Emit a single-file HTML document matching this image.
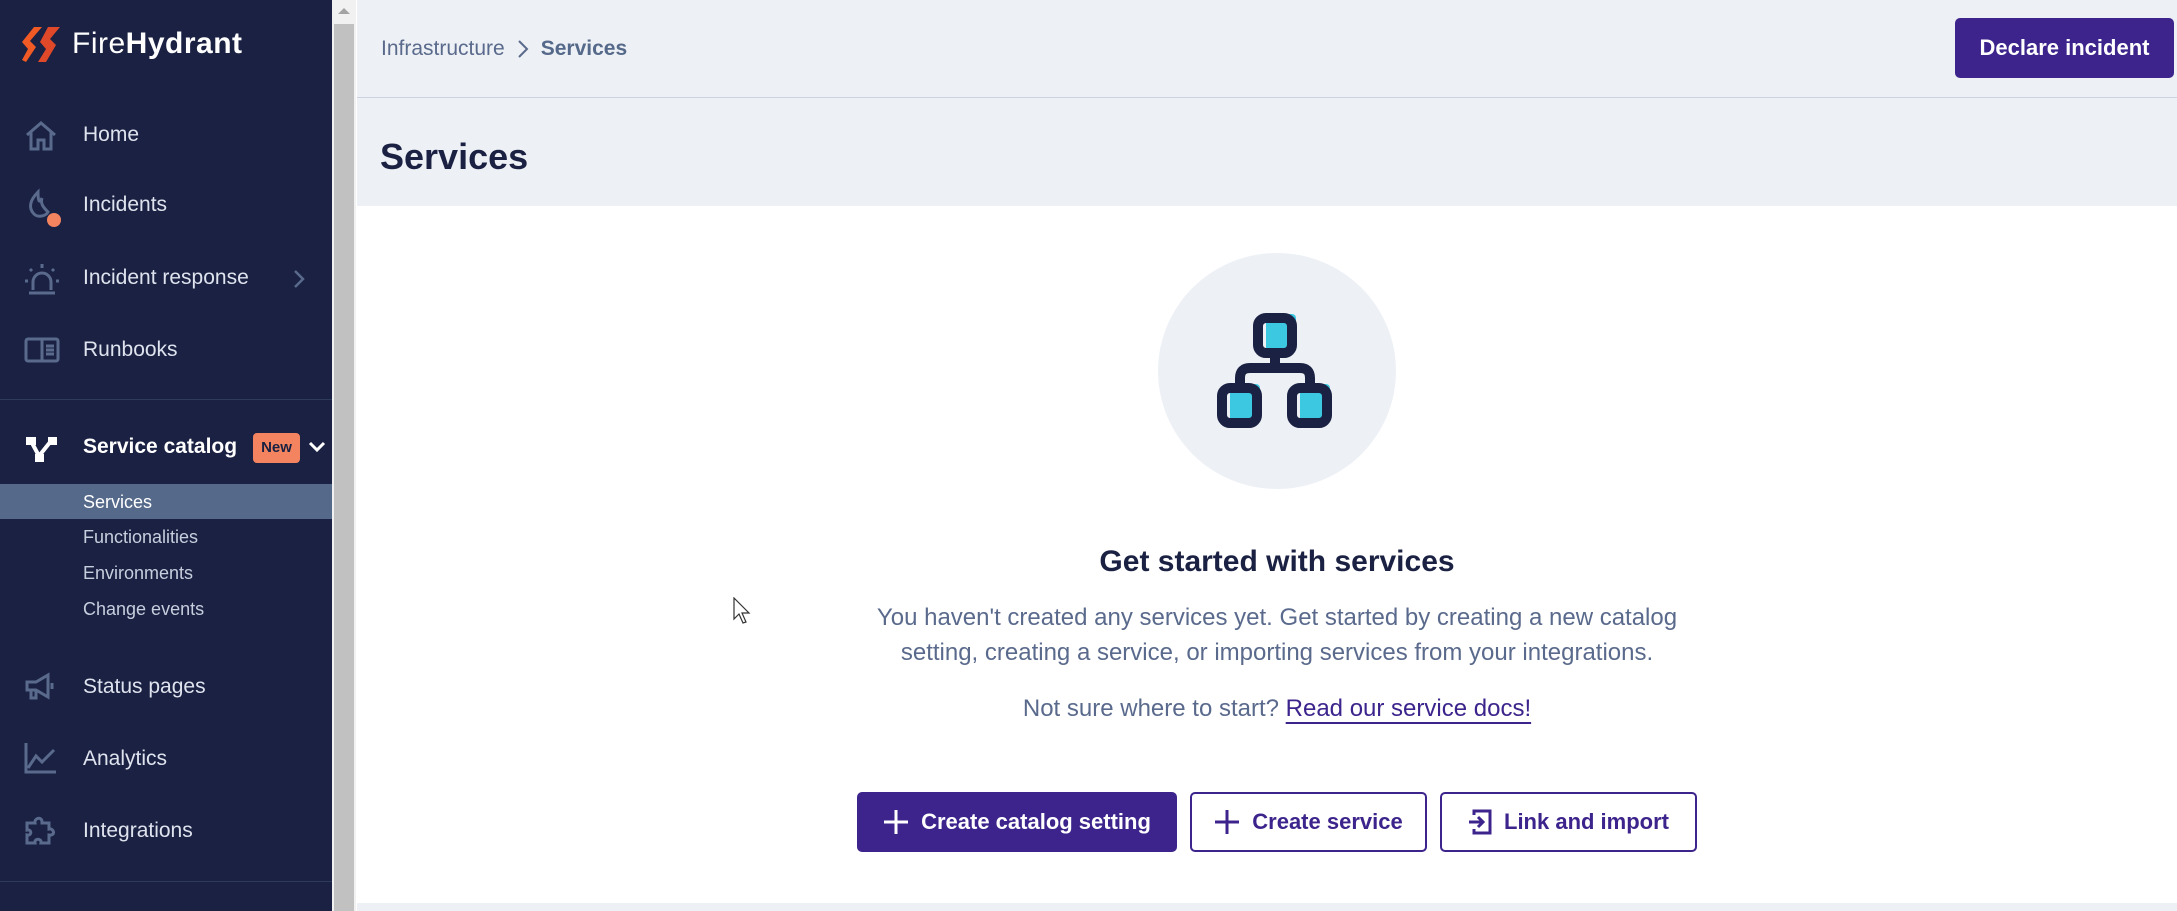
<!DOCTYPE html>
<html><head><meta charset="utf-8"><style>
*{margin:0;padding:0;box-sizing:border-box}
body{width:2177px;height:911px;overflow:hidden;background:#fff;font-family:"Liberation Sans",sans-serif;position:relative}
.side{position:absolute;left:0;top:0;width:332px;height:911px;background:#1a2142}
.sb{position:absolute;left:332px;top:0;width:24px;height:911px;background:#f1f1f1}
.sb .th{position:absolute;left:2px;top:24px;width:20px;height:887px;background:#c1c1c1}
.it{position:absolute;left:83px;color:#dfe3ee;font-size:21px;line-height:30px}
.ic{position:absolute;left:24px}
.sub{position:absolute;left:83px;color:#c7cede;font-size:18px;line-height:26px}
.main{position:absolute;left:357px;top:0;right:0;height:206px;background:#edf0f5}
.t{position:absolute;white-space:nowrap}
.btn{position:absolute;top:792px;height:60px;border-radius:5px;border:2px solid #3c248c;display:flex;align-items:center;justify-content:center;font-weight:bold;font-size:22px;gap:12px}
</style></head><body>
<div class="side">
  <svg style="position:absolute;left:22px;top:27px" width="38" height="35" viewBox="0 0 38 35"><path d="M12 0 L20 0 L8 14 L14 20 L4 35 L0 33 L6 22 L0 15 Z" fill="#f15a24"/><path d="M26 0 L38 0 L28 12 L34 18 L24 35 L16 35 L24 22 L18 15 Z" fill="#e0482a"/></svg>
  <div class="t" style="left:72px;top:27px;font-size:30px;color:#fff;letter-spacing:0.5px">Fire<b>Hydrant</b></div>

  <svg class="ic" style="top:121px" width="34" height="30" viewBox="0 0 34 30" fill="none" stroke="#5a6a8c" stroke-width="3"><path d="M3 14 L17 2 L31 14 M7 11 V28 H14 V19 H20 V28 H27 V11"/></svg>
  <div class="it" style="top:120px">Home</div>
  <svg class="ic" style="top:188px" width="40" height="40" viewBox="0 0 40 40" fill="none" stroke="#5a6a8c" stroke-width="3"><path d="M14 4 C6 12 4 20 10 26 C14 30 22 28 24 24 C20 20 16 16 18 10 C16 14 14 16 14 4Z"/><circle cx="30" cy="32" r="7" fill="#f4845f" stroke="none"/></svg>
  <div class="it" style="top:190px">Incidents</div>
  <svg class="ic" style="top:262px" width="36" height="34" viewBox="0 0 36 34" fill="none" stroke="#5a6a8c" stroke-width="3"><path d="M9 28 V20 A9 9 0 0 1 27 20 V28 M5 31 H31 M18 2 V6 M6 7 L8 9 M30 7 L28 9 M1 19 H4 M32 19 H35"/></svg>
  <div class="it" style="top:263px">Incident response</div>
  <svg style="position:absolute;left:293px;top:269px" width="12" height="20" viewBox="0 0 12 20" fill="none" stroke="#5a6a8c" stroke-width="2.5"><path d="M2 2 L10 10 L2 18"/></svg>
  <svg class="ic" style="top:337px" width="36" height="26" viewBox="0 0 36 26" fill="none" stroke="#5a6a8c" stroke-width="3"><rect x="2" y="2" width="32" height="22" rx="2"/><path d="M18 2 V24 M22 9 H30 M22 13 H30 M22 17 H30"/></svg>
  <div class="it" style="top:335px">Runbooks</div>
  <div style="position:absolute;left:0;top:399px;width:332px;height:1px;background:#2e3a5c"></div>

  <svg class="ic" style="top:434px" width="34" height="30" viewBox="0 0 34 30" fill="#fff"><rect x="2" y="3" width="10" height="8"/><rect x="24" y="3" width="9" height="8"/><rect x="11" y="20" width="9" height="8"/><path d="M8 9 L15 22 L27 7" stroke="#fff" stroke-width="4" fill="none"/></svg>
  <div class="it" style="top:432px;font-weight:bold;color:#fff">Service catalog</div>
  <div class="t" style="left:253px;top:433px;width:47px;height:30px;background:#f4845f;border-radius:4px;font-size:15px;font-weight:bold;color:#1a2142;text-align:center;line-height:30px">New</div>
  <svg style="position:absolute;left:308px;top:441px" width="18" height="12" viewBox="0 0 18 12" fill="none" stroke="#fff" stroke-width="3"><path d="M2 2 L9 9 L16 2"/></svg>
  <div style="position:absolute;left:0;top:484px;width:332px;height:35px;background:#55698a"></div>
  <div class="sub" style="top:489px;color:#fff">Services</div>
  <div class="sub" style="top:524px">Functionalities</div>
  <div class="sub" style="top:560px">Environments</div>
  <div class="sub" style="top:596px">Change events</div>

  <svg class="ic" style="top:672px" width="34" height="30" viewBox="0 0 34 30" fill="none" stroke="#5a6a8c" stroke-width="3"><path d="M3 10 H12 L24 3 V25 L12 18 H3 Z M7 18 V26 H12 V18 M28 11 V17"/></svg>
  <div class="it" style="top:672px">Status pages</div>
  <svg class="ic" style="top:742px" width="34" height="32" viewBox="0 0 34 32" fill="none" stroke="#5a6a8c" stroke-width="3"><path d="M2 1 V30 H32 M4 26 L12 14 L18 20 L30 8"/></svg>
  <div class="it" style="top:744px">Analytics</div>
  <svg class="ic" style="top:814px" width="34" height="32" viewBox="0 0 34 32" fill="none" stroke="#5a6a8c" stroke-width="3"><path d="M3 9 H11 C10 4 18 2 18 8 V9 H25 V15 C30 14 32 22 25 21 V29 H17 C18 24 10 24 11 29 H3 V21 C8 22 8 15 3 16 Z"/></svg>
  <div class="it" style="top:816px">Integrations</div>
  <div style="position:absolute;left:0;top:881px;width:332px;height:1px;background:#2e3a5c"></div>
</div>
<div class="sb"><div class="th"></div><div style="position:absolute;left:6px;top:8px;border-left:6px solid transparent;border-right:6px solid transparent;border-bottom:6px solid #a3a3a3"></div></div>

<div class="main">
  <div class="t" style="left:24px;top:37px;font-size:21px;color:#5a6a8c;display:flex;align-items:center;gap:12px">Infrastructure<svg width="12" height="20" viewBox="0 0 12 20" fill="none" stroke="#5a6a8c" stroke-width="2"><path d="M2 2 L10 10 L2 18"/></svg><b style="color:#55698a">Services</b></div>
  <div style="position:absolute;left:0;top:97px;right:0;height:1px;background:#cdd3e0"></div>
  <div class="t" style="left:23px;top:136px;font-size:36px;color:#1a2142;font-weight:bold">Services</div>
  <div style="position:absolute;left:1598px;top:18px;width:219px;height:60px;background:#3c248c;border-radius:5px;color:#fff;font-weight:bold;font-size:22px;text-align:center;line-height:60px">Declare incident</div>
</div>
<div style="position:absolute;left:357px;top:903px;right:0;height:8px;background:#edf0f5"></div>

<div style="position:absolute;left:1158px;top:253px;width:238px;height:236px;border-radius:50%;background:#edf0f5"></div>
<svg style="position:absolute;left:1210px;top:306px" width="130" height="130" viewBox="0 0 130 130">
  <g fill="#3cc8e1"><rect x="56" y="8" width="30" height="38" rx="4"/><rect x="20" y="78" width="30" height="38" rx="4"/><rect x="90" y="78" width="30" height="38" rx="4"/></g>
  <g fill="none" stroke="#1a2142" stroke-width="10"><rect x="48" y="12" width="34" height="35" rx="8"/><rect x="12" y="82" width="35" height="35" rx="8"/><rect x="82" y="82" width="35" height="35" rx="8"/><path d="M65 47 V62 M30 80 V72 Q30 62 40 62 H90 Q100 62 100 72 V80"/></g>
</svg>

<div class="t" style="left:0;width:2554px;text-align:center;top:545px;font-size:30px;font-weight:bold;color:#1a2142">Get started with services</div>
<div class="t" style="left:0;width:2554px;text-align:center;top:600px;font-size:24px;line-height:35px;color:#5a6a8c">You haven't created any services yet. Get started by creating a new catalog<br>setting, creating a service, or importing services from your integrations.</div>
<div class="t" style="left:0;width:2554px;text-align:center;top:695px;font-size:24px;color:#5a6a8c">Not sure where to start? <span style="color:#3c248c;text-decoration:underline;text-underline-offset:6px">Read our service docs!</span></div>

<div class="btn" style="left:857px;width:320px;background:#3c248c;color:#fff"><svg width="26" height="26" viewBox="0 0 26 26" stroke="#fff" stroke-width="3"><path d="M13 1 V25 M1 13 H25"/></svg>Create catalog setting</div>
<div class="btn" style="left:1190px;width:237px;background:#fff;color:#3c248c"><svg width="26" height="26" viewBox="0 0 26 26" stroke="#3c248c" stroke-width="3"><path d="M13 1 V25 M1 13 H25"/></svg>Create service</div>
<div class="btn" style="left:1440px;width:257px;background:#fff;color:#3c248c"><svg width="24" height="26" viewBox="0 0 24 26" fill="none" stroke="#3c248c" stroke-width="3"><path d="M6 6 V2 H22 V24 H6 V20 M1 13 H15 M10 8 L15 13 L10 18"/></svg>Link and import</div>

<svg style="position:absolute;left:733px;top:597px" width="20" height="28" viewBox="0 0 20 28"><path d="M1 1 V22 L6 17 L10 26 L13 25 L9 16 H16 Z" fill="#fff" stroke="#333" stroke-width="1.2"/></svg>
</body></html>
